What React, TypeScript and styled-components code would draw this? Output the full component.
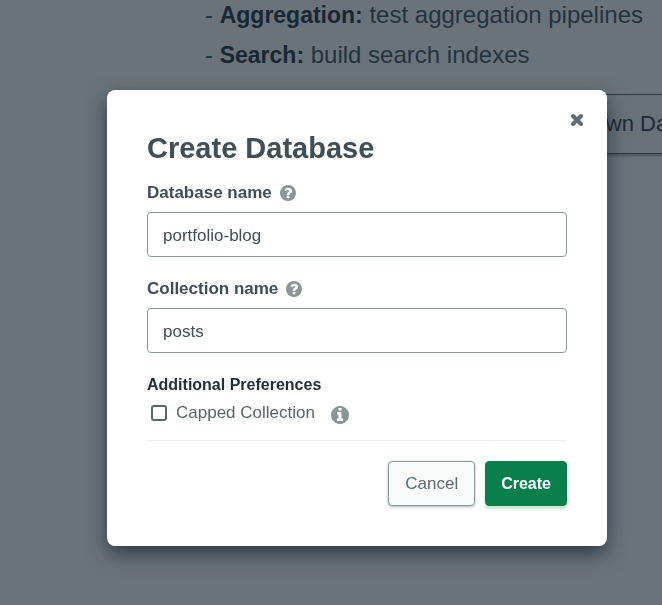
import React, { useState } from "react";
import styled, { createGlobalStyle, css } from "styled-components";

const GlobalStyle = createGlobalStyle`
  * { box-sizing: border-box; }
  body {
    margin: 0;
    overflow: hidden;
    background: #fff;
    font-family: "Liberation Sans", Arial, sans-serif;
  }
`;

const Page = styled.main`
  min-height: 100vh;
  padding-left: 205px;
  color: #4d5f69;
`;

const FeatureList = styled.ul`
  display: flex;
  flex-direction: column;
  gap: 10px;
  margin: 0;
  padding: 0;
  list-style: none;
  font-size: 24px;
  line-height: 30px;
  white-space: nowrap;
`;

const FeatureName = styled.strong`
  color: #34454f;
  font-size: 23px;
`;

const PageButton = styled.button`
  margin: 24px 0 0 272px;
  height: 60px;
  padding: 0 30px;
  border: 1px solid #5d6c74;
  border-radius: 4px;
  background: #f9fbfa;
  box-shadow: 0 2px 3px rgba(0, 0, 0, 0.3);
  color: #3d4f58;
  font: 22px "Liberation Sans", Arial, sans-serif;
  white-space: nowrap;
`;

const Overlay = styled.div`
  position: fixed;
  inset: 0;
  padding: 90px 55px 0 107px;
  background: rgba(6, 22, 33, 0.6);
`;

const Dialog = styled.section`
  position: relative;
  max-width: 500px;
  padding: 40px;
  border-radius: 8px;
  background: #fff;
  box-shadow: 0 8px 20px rgba(6, 22, 33, 0.6);
`;

const CloseButton = styled.button`
  position: absolute;
  top: 20px;
  right: 20px;
  display: flex;
  padding: 3px;
  border: 0;
  background: none;
  color: #5d6c74;
`;

const Title = styled.h1`
  margin: 0 0 15px;
  color: #3d4f58;
  font-size: 29px;
  line-height: 36px;
`;

const Fields = styled.div`
  display: flex;
  flex-direction: column;
  gap: 20px;
  margin-bottom: 20px;
`;

const LabelRow = styled.div`
  display: flex;
  align-items: center;
  gap: 8px;
  padding-bottom: 7px;
  color: #89979b;
  line-height: 24px;
`;

const FieldLabel = styled.label`
  color: #3d4f58;
  font-size: 17px;
  font-weight: bold;
`;

const TextInput = styled.input`
  display: block;
  width: 100%;
  height: 45px;
  padding: 2px 15px 0;
  border: 1px solid #89979b;
  border-radius: 4px;
  background: #fff;
  color: #3d4f58;
  font: 17px "Liberation Sans", Arial, sans-serif;
`;

const Preferences = styled.fieldset`
  margin: 0;
  padding: 0 0 15px;
  border: 0;
  border-bottom: 1px solid #e7eeec;
`;

const Legend = styled.legend`
  padding: 0;
  color: #21313c;
  font-size: 16px;
  font-weight: bold;
  line-height: 24px;
`;

const CheckRow = styled.div`
  display: flex;
  align-items: center;
  margin-top: 4px;
  padding-left: 4px;
  color: #89979b;
`;

const Checkbox = styled.input`
  appearance: none;
  flex: none;
  width: 16px;
  height: 16px;
  margin: 0 9px 0 0;
  border: 2px solid #5e6668;
  border-radius: 3px;
  background: #fff;
  &:checked {
    background: #09804c;
  }
`;

const CheckLabel = styled.label`
  margin-right: 16px;
  color: #5b6468;
  font-size: 17px;
  line-height: 24px;
`;

const Glyph = styled.svg`
  flex: none;
  fill: currentColor;
`;

const InfoGlyph = styled(Glyph)`
  margin-top: 4px;
`;

const Actions = styled.footer`
  display: flex;
  justify-content: flex-end;
  gap: 10px;
  padding-top: 20px;
`;

const Button = styled.button<{ $primary?: boolean }>`
  height: 45px;
  padding: 1px 16px 0;
  border: 1px solid #89979b;
  border-radius: 4px;
  background: #f9fbfa;
  box-shadow: 0 1px 3px rgba(6, 22, 33, 0.3);
  color: #5d6c74;
  font: 17px "Liberation Sans", Arial, sans-serif;
  ${({ $primary }) =>
    $primary &&
    css`
      padding: 1px 15px 0;
      border-color: #09804c;
      background: #09804c;
      box-shadow: 0 3px 3px #c3e7ca;
      color: #fff;
      font-size: 16px;
      font-weight: bold;
    `}
`;

const CloseIcon = () => (
  <svg width="14" height="14" viewBox="0 0 14 14" fill="none" stroke="currentColor" strokeWidth="4" strokeLinecap="round" aria-hidden="true">
    <path d="M3 3 11 11M11 3 3 11" />
  </svg>
);

const QuestionIcon = () => (
  <Glyph width="16" height="16" viewBox="128 128 1536 1536" aria-hidden="true">
    <path d="M1024 1376v-192q0-14-9-23t-23-9h-192q-14 0-23 9t-9 23v192q0 14 9 23t23 9h192q14 0 23-9t9-23zm256-672q0-88-55.5-163t-138.5-116-170-41q-243 0-371 213-15 24 8 42l132 100q7 6 19 6 16 0 25-12 53-68 86-92 34-24 86-24 48 0 85.5 26t37.5 59q0 38-20 61t-68 45q-63 28-115.5 86.5t-52.5 125.5v36q0 14 9 23t23 9h192q14 0 23-9t9-23q0-19 21.5-49.5t54.5-49.5q32-18 49-28.5t46-35 44.5-48 28-60.5 12.5-81zm384 192q0 209-103 385.5t-279.5 279.5-385.5 103-385.5-103-279.5-279.5-103-385.5 103-385.5 279.5-279.5 385.5-103 385.5 103 279.5 279.5 103 385.5z" />
  </Glyph>
);

const InfoIcon = () => (
  <InfoGlyph width="18" height="18" viewBox="128 128 1536 1536" aria-hidden="true">
    <path d="M1152 1376v-160q0-14-9-23t-23-9h-96v-512q0-14-9-23t-23-9h-320q-14 0-23 9t-9 23v160q0 14 9 23t23 9h96v320h-96q-14 0-23 9t-9 23v160q0 14 9 23t23 9h448q14 0 23-9t9-23zm-128-896v-160q0-14-9-23t-23-9h-192q-14 0-23 9t-9 23v160q0 14 9 23t23 9h192q14 0 23-9t9-23zm640 416q0 209-103 385.5t-279.5 279.5-385.5 103-385.5-103-279.5-279.5-103-385.5 103-385.5 279.5-279.5 385.5-103 385.5 103 279.5 279.5 103 385.5z" />
  </InfoGlyph>
);

const fields = [
  { id: "database", label: "Database name", value: "portfolio-blog" },
  { id: "collection", label: "Collection name", value: "posts" },
];

export default function App() {
  const [capped, setCapped] = useState(false);
  return (
    <>
      <GlobalStyle />
      <Page>
        <FeatureList>
          <li>- <FeatureName>Aggregation:</FeatureName> test aggregation pipelines</li>
          <li>- <FeatureName>Search:</FeatureName> build search indexes</li>
        </FeatureList>
        <PageButton type="button">Add My Own Data</PageButton>
      </Page>
      <Overlay>
        <Dialog role="dialog" aria-modal="true" aria-labelledby="title">
          <CloseButton type="button" aria-label="Close"><CloseIcon /></CloseButton>
          <Title id="title">Create Database</Title>
          <Fields>
            {fields.map(({ id, label, value }) => (
              <div key={id}>
                <LabelRow>
                  <FieldLabel htmlFor={id}>{label}</FieldLabel>
                  <QuestionIcon />
                </LabelRow>
                <TextInput id={id} defaultValue={value} />
              </div>
            ))}
          </Fields>
          <Preferences>
            <Legend>Additional Preferences</Legend>
            <CheckRow>
              <Checkbox id="capped" type="checkbox" checked={capped} onChange={(e) => setCapped(e.target.checked)} />
              <CheckLabel htmlFor="capped">Capped Collection</CheckLabel>
              <InfoIcon />
            </CheckRow>
          </Preferences>
          <Actions>
            <Button type="button">Cancel</Button>
            <Button type="button" $primary>Create</Button>
          </Actions>
        </Dialog>
      </Overlay>
    </>
  );
}
